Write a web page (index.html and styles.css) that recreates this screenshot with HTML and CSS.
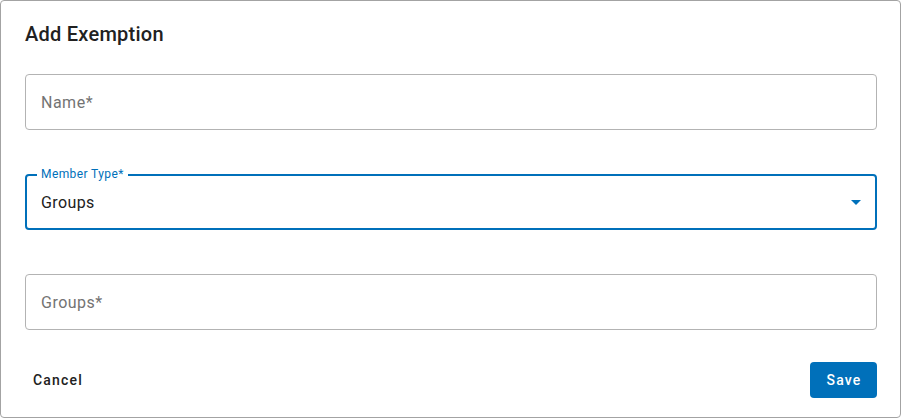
FILE: index.html
```html
<!DOCTYPE html>
<html lang="en">
<head>
<meta charset="utf-8">
<title>Add Exemption</title>
<link rel="stylesheet" href="styles.css">
</head>
<body>
<div class="dialog">
  <h2 class="title">Add Exemption</h2>
  <div class="fields">
    <div class="field">
      <span class="placeholder">Name*</span>
    </div>
    <div class="field field-focused">
      <span class="float-label">Member Type*</span>
      <span class="value">Groups</span>
      <svg class="arrow" width="10" height="5" viewBox="0 0 10 5"><path d="M0 0 L10 0 L5 5 Z" fill="#0070ba"/></svg>
    </div>
    <div class="field">
      <span class="placeholder">Groups*</span>
    </div>
  </div>
  <div class="actions">
    <button class="btn btn-text">Cancel</button>
    <button class="btn btn-primary">Save</button>
  </div>
</div>
</body>
</html>
```
FILE: styles.css
```css
* { box-sizing: border-box; }
html, body { margin: 0; padding: 0; background: #ffffff; }
body { font-family: Roboto, "Noto Sans", sans-serif; }
.dialog {
  width: 901px;
  height: 418px;
  border: 1px solid #a3a3a3;
  border-radius: 4px;
  padding: 21px 23px 20px 24px;
  display: flex;
  flex-direction: column;
  background: #fff;
}
.title {
  margin: 0;
  font-size: 20px;
  line-height: 24px;
  font-weight: 500;
  letter-spacing: 0.25px;
  color: #212121;
}
.fields {
  margin-top: 28px;
  display: flex;
  flex-direction: column;
  gap: 44px;
}
.field {
  position: relative;
  height: 56px;
  border: 1px solid #b3b3b3;
  border-radius: 4px;
  display: flex;
  align-items: center;
  padding: 0 15px;
}
.field-focused {
  border: 2px solid #0070ba;
  padding: 0 14px;
}
.placeholder {
  font-size: 16px;
  color: #737373;
  letter-spacing: 0.5px;
}
.value {
  font-size: 16px;
  color: #212121;
  letter-spacing: 0.4px;
  flex: 1;
}
.float-label {
  position: absolute;
  left: 10px;
  top: -9px;
  padding: 0 4px;
  background: #fff;
  font-size: 12px;
  line-height: 14px;
  color: #0070ba;
  letter-spacing: 0.4px;
}
.arrow { display: block; }
.actions {
  margin-top: 32px;
  display: flex;
  justify-content: space-between;
  align-items: center;
}
.btn {
  font-family: Roboto, "Noto Sans", sans-serif;
  font-size: 14px;
  font-weight: 500;
  letter-spacing: 1.2px;
  height: 36px;
  border: none;
  border-radius: 4px;
  padding: 0 8px;
  cursor: pointer;
}
.btn-text { background: transparent; color: #212121; }
.btn-primary {
  background: #0070ba;
  color: #fff;
  width: 67px;
  padding: 0 0 0 1px;
}
```
